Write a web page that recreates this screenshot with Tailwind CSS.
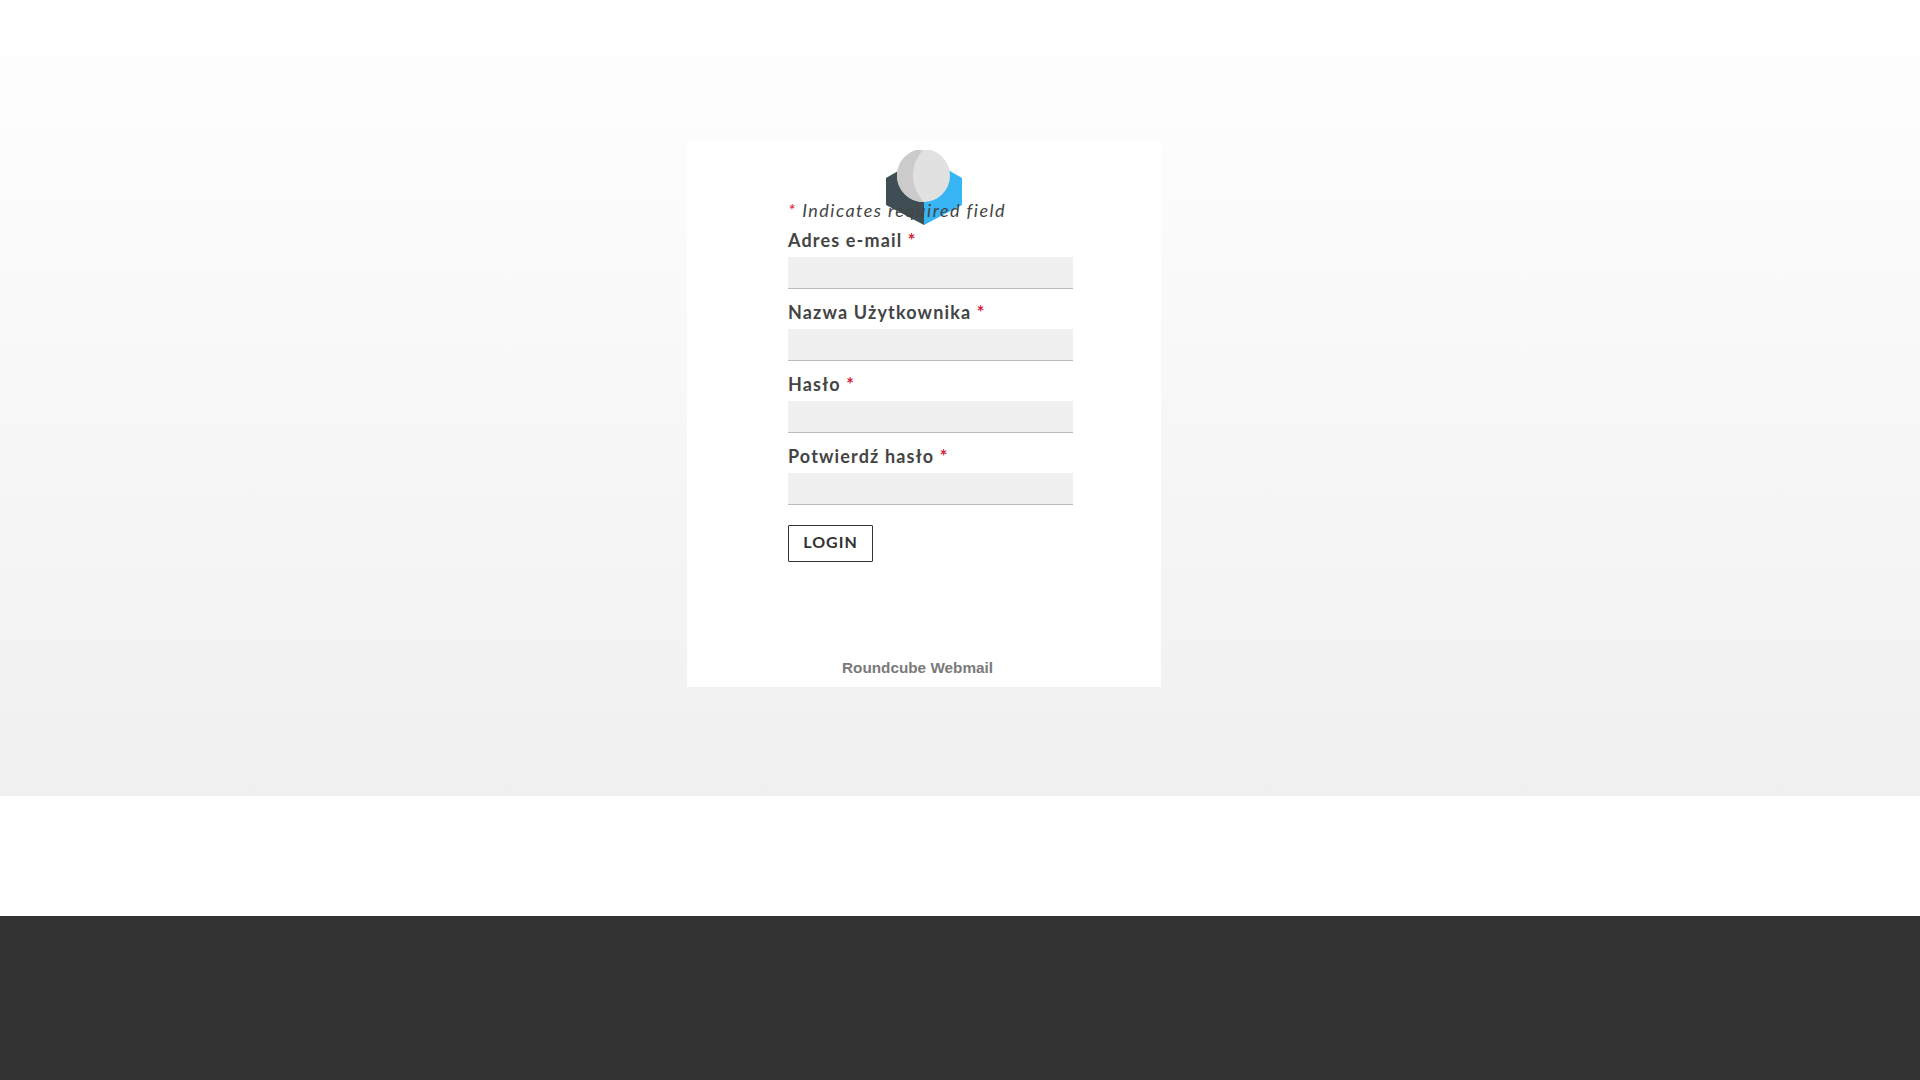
<!DOCTYPE html>
<html lang="pl">
<head>
<meta charset="utf-8">
<title>Roundcube Webmail</title>
<script src="https://cdn.jsdelivr.net/npm/@tailwindcss/browser@4"></script>
</head>
<body class="bg-white font-['Lato','Liberation_Sans',sans-serif]">
<main class="h-[796px] bg-linear-to-b from-white to-[#f0f0f0] pt-[141px]">
  <section class="relative ml-[687px] flex h-[546px] w-[474px] flex-col bg-white pl-[101px]">
    <svg class="absolute left-[199px] top-[9px] h-[75px] w-[76px]" viewBox="0 0 76 75" aria-hidden="true">
      <path d="M0 28 L38 6 L38 75 L0 55 Z" fill="#3f4d55"/>
      <path d="M76 28 L38 6 L38 75 L76 55 Z" fill="#37b5f5"/>
      <circle cx="37.5" cy="25.5" r="26.5" fill="#e1e1e1"/>
      <path d="M37.5 -1 A26.5 26.5 0 0 0 37.5 52 Q16 25 37.5 -1 Z" fill="#cbcbcb"/>
    </svg>
    <p class="relative mt-[56px] h-[26px] text-[18px] leading-[26px] tracking-[1.45px] text-[#444] italic"><span class="text-[#d0233f]">*</span> Indicates required field</p>
    <form class="relative mt-[1px] flex flex-col">
      <label class="h-[33px] text-[18px] leading-[32px] font-bold tracking-[1.15px] text-[#444]">Adres e-mail <span class="text-[#d0233f]">*</span></label>
      <input type="text" class="h-[32px] w-[285px] border-b border-[#bbb] bg-[#f0f0f0]">
      <label class="mt-[7px] h-[33px] text-[18px] leading-[32px] font-bold tracking-[1.15px] text-[#444]">Nazwa Użytkownika <span class="text-[#d0233f]">*</span></label>
      <input type="text" class="h-[32px] w-[285px] border-b border-[#bbb] bg-[#f0f0f0]">
      <label class="mt-[7px] h-[33px] text-[18px] leading-[32px] font-bold tracking-[1.15px] text-[#444]">Hasło <span class="text-[#d0233f]">*</span></label>
      <input type="password" class="h-[32px] w-[285px] border-b border-[#bbb] bg-[#f0f0f0]">
      <label class="mt-[7px] h-[33px] text-[18px] leading-[32px] font-bold tracking-[1.15px] text-[#444]">Potwierdź hasło <span class="text-[#d0233f]">*</span></label>
      <input type="password" class="h-[32px] w-[285px] border-b border-[#bbb] bg-[#f0f0f0]">
      <button type="button" class="mt-[20px] h-[37px] w-[85px] rounded-[1px] border border-[#333] pb-[3px] text-[16px] font-bold tracking-[1px] text-[#333]">LOGIN</button>
    </form>
    <footer class="absolute bottom-[9px] left-[155px] font-['Liberation_Sans',sans-serif] text-[15.3px] leading-[20px] font-bold text-[#7a7a7a]">Roundcube Webmail</footer>
  </section>
</main>
<div class="h-[120px] bg-white"></div>
<div class="h-[164px] bg-[#333]"></div>
</body>
</html>
